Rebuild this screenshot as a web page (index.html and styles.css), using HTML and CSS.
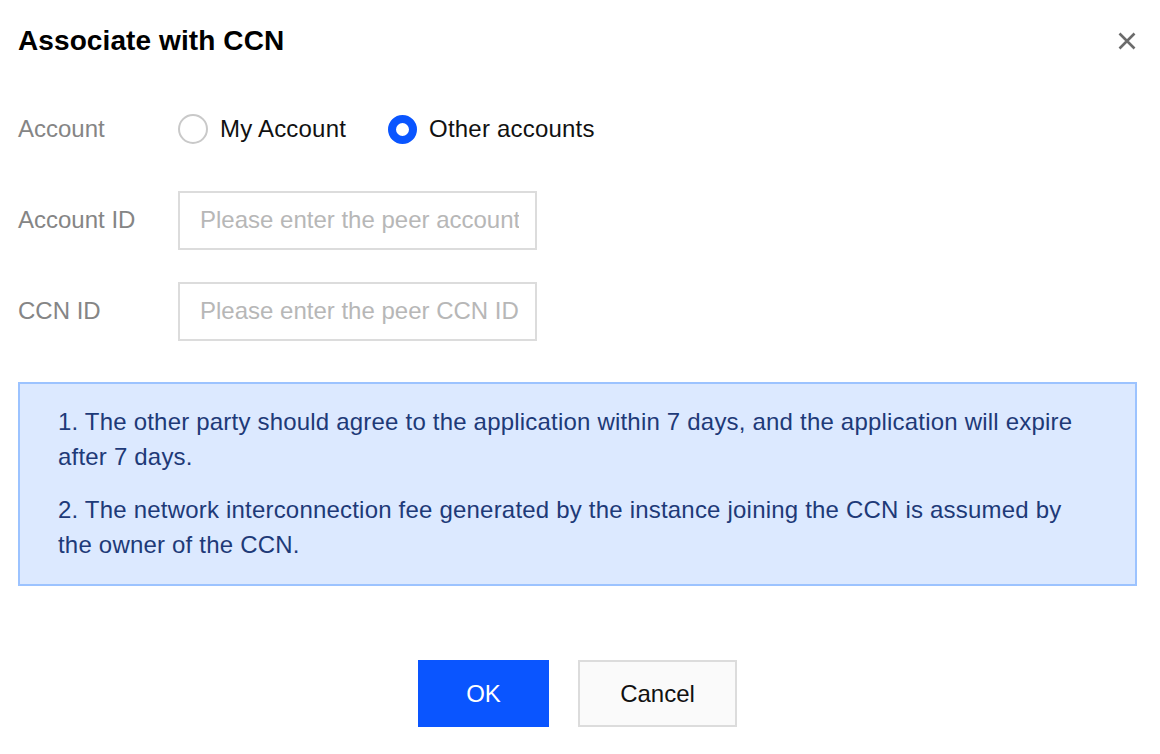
FILE: index.html
```html
<!DOCTYPE html>
<html lang="en">
<head>
<meta charset="utf-8">
<title>Associate with CCN</title>
<link rel="stylesheet" href="styles.css">
</head>
<body>
<div class="dialog">
  <div class="dialog-header">
    <h1 class="dialog-title">Associate with CCN</h1>
    <button class="close-btn" type="button" aria-label="Close">
      <svg width="18" height="18" viewBox="0 0 18 18"><path d="M1.5 1.5L16.5 16.5M16.5 1.5L1.5 16.5" stroke="#6b6b6b" stroke-width="2.6" stroke-linecap="butt"/></svg>
    </button>
  </div>
  <div class="form">
    <div class="form-row">
      <div class="form-label">Account</div>
      <div class="form-control radios">
        <label class="radio"><span class="radio-dot"></span><span class="radio-text">My Account</span></label>
        <label class="radio checked"><span class="radio-dot"></span><span class="radio-text">Other accounts</span></label>
      </div>
    </div>
    <div class="form-row">
      <div class="form-label">Account ID</div>
      <div class="form-control"><input class="input" type="text" placeholder="Please enter the peer account ID"></div>
    </div>
    <div class="form-row">
      <div class="form-label">CCN ID</div>
      <div class="form-control"><input class="input" type="text" placeholder="Please enter the peer CCN ID"></div>
    </div>
  </div>
  <div class="notice">
    <p>1. The other party should agree to the application within 7 days, and the application will expire after 7 days.</p>
    <p>2. The network interconnection fee generated by the instance joining the CCN is assumed by the owner of the CCN.</p>
  </div>
  <div class="footer">
    <button class="btn btn-primary" type="button">OK</button>
    <button class="btn btn-default" type="button">Cancel</button>
  </div>
</div>
</body>
</html>
```

FILE: styles.css
```css
* { box-sizing: border-box; }

html, body {
  margin: 0;
  padding: 0;
  background: #ffffff;
}

body {
  font-family: "Liberation Sans", Arial, Helvetica, sans-serif;
  color: #000;
  width: 1160px;
  height: 754px;
  overflow: hidden;
}

.dialog {
  padding: 0 23px 0 18px;
}

.dialog-header {
  display: flex;
  justify-content: space-between;
  align-items: flex-start;
  padding-top: 27px;
  height: 100px;
}

.dialog-title {
  margin: 0;
  font-size: 28px;
  line-height: 28px;
  font-weight: 700;
  color: #000;
  letter-spacing: 0.1px;
}

.close-btn {
  margin-top: 5px;
  margin-right: 1px;
  padding: 0;
  border: 0;
  background: none;
  width: 18px;
  height: 18px;
  display: flex;
}

.form {
  display: flex;
  flex-direction: column;
  gap: 33px;
}

.form-row {
  display: flex;
  align-items: center;
  height: 58px;
}

.form-label {
  width: 160px;
  flex: none;
  font-size: 24px;
  color: #858585;
}

.form-control {
  display: flex;
  align-items: center;
}

.radios {
  gap: 42px;
}

.radio {
  display: flex;
  align-items: center;
  gap: 12px;
  font-size: 24px;
  color: #111;
  letter-spacing: 0.2px;
}

.radio-dot {
  width: 30px;
  height: 30px;
  border-radius: 50%;
  border: 2px solid #c9c9c9;
  background: #fff;
}

.radio.checked .radio-dot {
  width: 29px;
  height: 29px;
  border: 8.5px solid #0a55ff;
}

.input {
  width: 359px;
  height: 59px;
  border: 2px solid #dcdcdc;
  padding: 0 16px 0 20px;
  font-family: inherit;
  font-size: 24px;
  color: #000;
  background: #fff;
  outline: none;
}

.input::placeholder {
  color: #b7b7b7;
}

.notice {
  margin-top: 42px;
  border: 2px solid #9cc3ff;
  background: #dce9ff;
  padding: 20px 60px 22px 38px;
  color: #1e3a78;
  font-size: 24px;
  line-height: 35px;
  letter-spacing: 0.2px;
  display: flex;
  flex-direction: column;
  gap: 18px;
  width: 1119px;
}

.notice p {
  margin: 0;
}

.footer {
  display: flex;
  justify-content: center;
  gap: 29px;
  margin-top: 74px;
}

.btn {
  height: 67px;
  font-family: inherit;
  font-size: 24px;
  border-radius: 0;
  padding: 0;
  cursor: pointer;
}

.btn-primary {
  width: 131px;
  background: #0a55ff;
  border: 0;
  color: #fff;
}

.btn-default {
  width: 159px;
  background: #fafafa;
  border: 2px solid #dcdcdc;
  color: #111;
}
```
